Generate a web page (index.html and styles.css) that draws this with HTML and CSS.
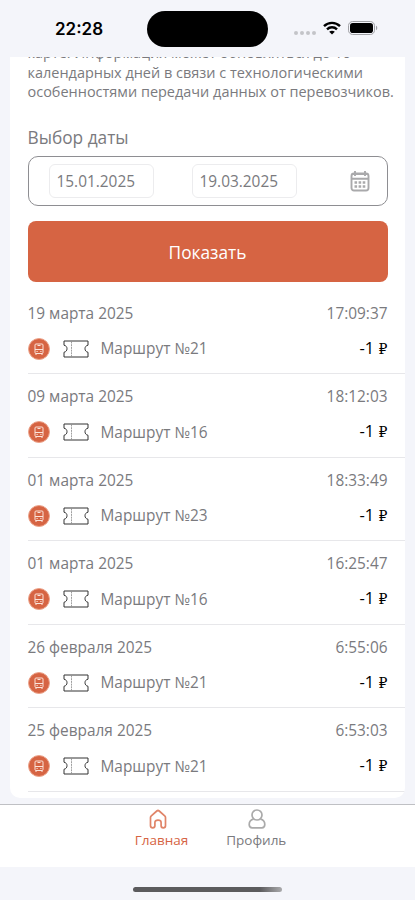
FILE: index.html
```html
<!DOCTYPE html>
<html lang="ru">
<head>
  <meta charset="UTF-8" />
  <meta name="viewport" content="width=device-width, initial-scale=1.0" />
  <title>История поездок</title>
  <link rel="stylesheet" href="styles.css">
</head>
<body>
  <!-- общие иконки -->
  <svg class="sprite">
    <symbol id="bus" viewBox="0 0 22 22">
      <circle cx="11" cy="11" r="10.5" fill="#d66443" stroke="#eca58d" />
      <rect x="7" y="6" width="8" height="9.5" rx="1" fill="none" stroke="#fbe3da" />
      <path d="M7 11.5h8M9.500 7.500h3M8 15.500v1.500M14 15.500v1.500M8.500 13.500h1.200M12.300 13.500h1.200" fill="none" stroke="#fbe3da" />
    </symbol>
    <symbol id="ticket" viewBox="0 0 26 18">
      <path d="M1 1h24v4.2c-2.2.5-3 1.8-3 3.5s.8 3 3 3.6V17H1v-4.7c2.2-.6 3-1.9 3-3.6S3.2 5.7 1 5.2z" fill="none" stroke="#333" stroke-linejoin="round" />
      <path d="M8.500 1.500v15" stroke="#888" stroke-width=".8" stroke-dasharray="2 .7" />
    </symbol>
  </svg>

  <header class="status-bar">
    <span class="time">22:28</span>
    <div class="island"></div>
    <div class="signals">
      <svg class="dots" width="22" height="4" viewBox="0 0 22 4" fill="#c3c4c8">
        <circle cx="2" cy="2" r="2" /><circle cx="8" cy="2" r="2" /><circle cx="14" cy="2" r="2" /><circle cx="20" cy="2" r="2" />
      </svg>
      <svg class="wifi" width="18" height="14" viewBox="0 0 18 14" fill="none" stroke="#000" stroke-width="2.4">
        <path d="M1 5.2C5.5.7 12.5.7 17 5.2M4 8.3c2.8-2.7 7.2-2.7 10 0" />
        <path d="M9 13.5 6.2 10.7c1.6-1.3 4-1.3 5.6 0z" fill="#000" stroke="none" />
      </svg>
      <svg class="battery" width="30" height="14" viewBox="0 0 30 14">
        <rect x=".5" y=".5" width="26" height="13" rx="4.2" fill="none" stroke="#a0a1a5" />
        <rect x="2" y="2" width="23" height="10" rx="2.8" />
        <path d="M28 4.8c1.7.6 1.7 3.8 0 4.4z" fill="#a0a1a5" />
      </svg>
    </div>
  </header>

  <main class="content">
    <div class="card">
      <p class="note">карте. Информация может обновляться до 10<br>календарных дней в связи с технологическими<br>особенностями передачи данных от перевозчиков.</p>

      <h2>Выбор даты</h2>
      <div class="dates">
        <span class="date">15.01.2025</span>
        <span class="date">19.03.2025</span>
        <svg class="calendar" width="20" height="22" viewBox="0 0 20 22" fill="none" stroke="#a9a9ab" stroke-width="1.9">
          <rect x="1.5" y="3.5" width="17" height="17" rx="2.5" />
          <path d="M1.5 8.8h17M5 1v5M15 1v5M2 4h16" />
          <path d="M4.500 12.500h11M4.500 16.500h11" stroke-width="2.400" stroke-dasharray="2.600 1.500" />
        </svg>
      </div>
      <button class="show-btn">Показать</button>

      <ul id="trips" class="trips"></ul>
    </div>
  </main>

  <nav class="tabs">
    <a class="tab active">
      <svg width="18" height="20" viewBox="0 0 18 20" fill="none" stroke="#e08468" stroke-width="1.7" stroke-linejoin="round">
        <path d="M1.5 8.5Q1.5 7.5 2.3 6.8L7.8 2Q9 1 10.2 2l5.5 4.8q.8.7.8 1.7v8.3q0 2-2.2 2t-2.2-2V13.5q0-2.3-3.1-2.3t-3.1 2.3v3.3q0 2-2.2 2t-2.2-2z" />
      </svg>
      <span>Главная</span>
    </a>
    <a class="tab">
      <svg width="18" height="20" viewBox="0 0 18 20" fill="none" stroke="#aaa" stroke-width="1.7">
        <circle cx="9" cy="6" r="5" />
        <path d="M5.5 10.2C3 10.8 1.2 12.8 1.2 15.5q0 3.3 3 3.3h9.6q3 0 3-3.3c0-2.700-1.800-4.700-4.300-5.300" />
      </svg>
      <span>Профиль</span>
    </a>
  </nav>
  <footer class="home-area"><div class="home-bar"></div></footer>

  <script>
    const trips = [
      ['19 марта 2025', '17:09:37', 21],
      ['09 марта 2025', '18:12:03', 16],
      ['01 марта 2025', '18:33:49', 23],
      ['01 марта 2025', '16:25:47', 16],
      ['26 февраля 2025', '6:55:06', 21],
      ['25 февраля 2025', '6:53:03', 21]
    ];

    document.getElementById('trips').innerHTML = trips.map(([date, time, route]) => `
      <li class="trip">
        <div class="trip-head"><span>${date}</span><span>${time}</span></div>
        <div class="trip-body">
          <svg class="bus"><use href="#bus" /></svg>
          <svg class="ticket"><use href="#ticket" /></svg>
          <span class="route">Маршрут №${route}</span>
          <span class="price">-1 <span class="rub">₽</span></span>
        </div>
      </li>`).join('');
  </script>
</body>
</html>
```
FILE: styles.css
```css
* {
  box-sizing: border-box;
}

body {
  margin: 0;
  height: 900px;
  display: flex;
  flex-direction: column;
  overflow: hidden;
  background-color: #f4f5fa;
  color: #7a7a7e;
  font-family: 'Open Sans', 'Noto Sans', sans-serif;
  font-size: 15.4px;
}

.sprite {
  display: none;
}

/* статус-бар */
.status-bar {
  height: 57px;
  flex: none;
  display: grid;
  grid-template-columns: 147px 121px 1fr;
  color: #000;
}

.time {
  padding: 18px 0 0 55px;
  font: 600 17px/22px Inter, sans-serif;
}

.island {
  height: 36px;
  margin-top: 11px;
  border-radius: 18px;
  background: #000;
}

.signals {
  display: flex;
  align-items: flex-start;
  padding: 21px 0 0 26px;
}

.dots {
  margin-top: 10px;
}

.wifi {
  margin-left: 7px;
}

.battery {
  margin-left: 7px;
}

/* карточка */
.content {
  height: 747px;
  flex: none;
  overflow: hidden;
  padding: 0 10px;
}

.card {
  height: 741px;
  overflow: hidden;
  background: #fff;
  border-radius: 0 0 10px 10px;
  padding: 0 17.5px;
}

.note {
  margin: -14px 0 0;
  font-size: 14.48px;
  line-height: 19.5px;
  white-space: nowrap;
}

h2 {
  margin: 23px 0 6px;
  font-size: 17.3px;
  font-weight: 400;
  line-height: 25px;
}

.dates {
  height: 50px;
  display: flex;
  align-items: center;
  border: 1px solid #8e8e92;
  border-radius: 10px;
  padding: 0 17px 0 20px;
}

.date {
  width: 105px;
  height: 34px;
  margin-right: 38px;
  padding-left: 7px;
  border: 1px solid #ececee;
  border-radius: 6px;
  line-height: 34px;
}

.calendar {
  margin-left: auto;
}

.show-btn {
  display: block;
  width: 100%;
  height: 61px;
  margin-top: 15px;
  padding-top: 3px;
  border: none;
  border-radius: 8px;
  background-color: #d66443;
  color: #fff;
  font: inherit;
  font-size: 17.3px;
}

/* поездки */
.trips {
  list-style: none;
  margin: 9px -17.5px 0 0;
  padding: 0;
}

.trip {
  height: 83.6px;
  border-bottom: 1px solid #e7e7ea;
  padding: 11px 17.5px 0 0;
}

.trip-head {
  display: flex;
  justify-content: space-between;
  line-height: 24px;
}

.trip-body {
  display: flex;
  align-items: center;
  height: 24px;
  margin-top: 11px;
}

.bus {
  width: 22px;
  height: 22px;
  margin-left: 0.5px;
}

.ticket {
  width: 26px;
  height: 18px;
  margin-left: 12.5px;
}

.route {
  margin-left: 12px;
}

.price {
  margin: -3px 0 0 auto;
  color: #000;
  font-size: 16.5px;
}

.rub {
  font-family: 'DejaVu Serif', serif;
  font-size: 14px;
}

/* нижнее меню */
.tabs {
  height: 63px;
  flex: none;
  display: flex;
  justify-content: center;
  gap: 38px;
  padding: 4px 0 0 6px;
  border-top: 1px solid #bfc0c4;
  background: #fff;
}

.tab {
  display: flex;
  flex-direction: column;
  font-size: 13.5px;
  line-height: 22px;
}

.tab svg {
  margin-left: 14px;
}

.tab + .tab svg {
  margin-left: 22px;
}

.active {
  color: #d66443;
}

.home-area {
  flex: 1;
  padding-top: 20px;
}

.home-bar {
  width: 149px;
  height: 5px;
  margin: 0 auto;
  border-radius: 3px;
  background: linear-gradient(90deg, #5b5b5d 85%, #aaaaac);
}
```
